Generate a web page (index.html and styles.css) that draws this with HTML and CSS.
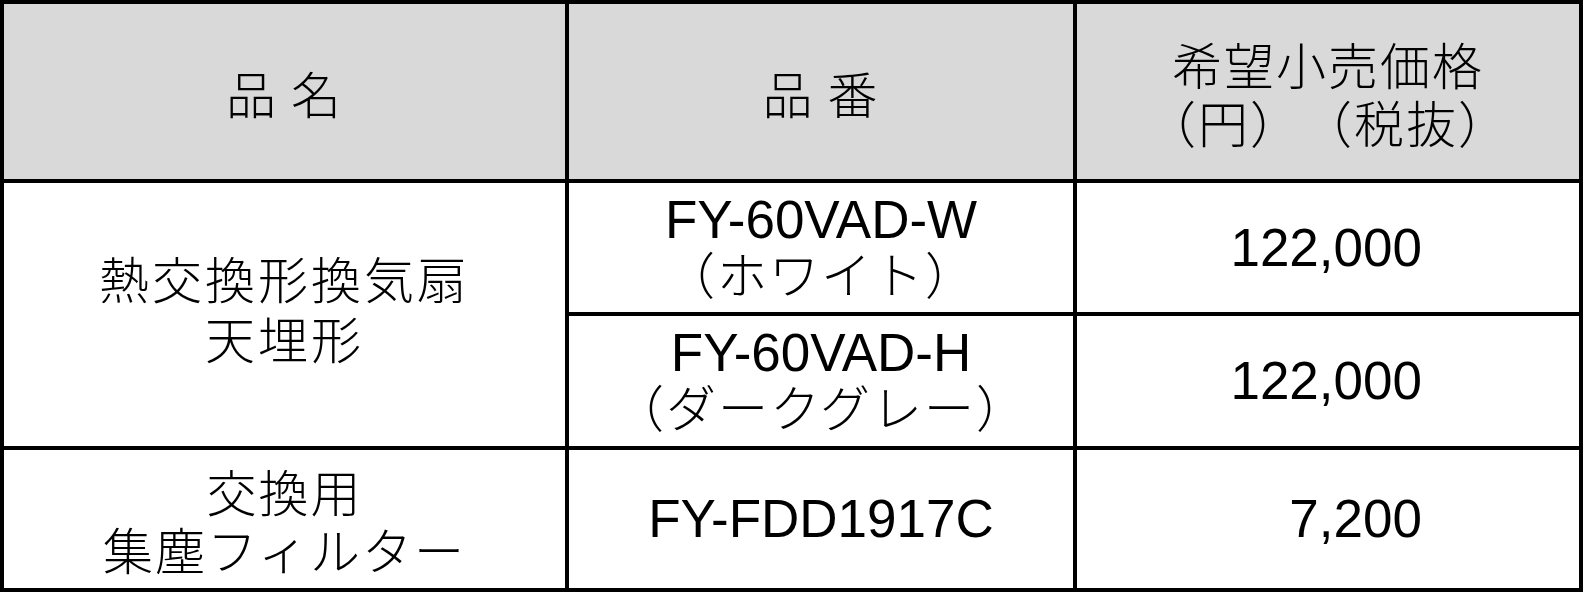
FILE: index.html
```html
<!DOCTYPE html>
<html lang="ja">
<head>
<meta charset="utf-8">
<link rel="stylesheet" href="styles.css">
</head>
<body>
<div class="table">
  <div class="cell head"><span class="ja">品 名</span></div>
  <div class="cell head"><span class="ja">品 番</span></div>
  <div class="cell head"><span class="ja paren">希望小売価格<br>（円）（税抜）</span></div>

  <div class="cell name-main"><span class="ja">熱交換形換気扇<br>天埋形</span></div>
  <div class="cell model"><span>FY-60VAD-W<br><span class="ja">（ホワイト）</span></span></div>
  <div class="cell price"><span>122,000</span></div>

  <div class="cell model"><span>FY-60VAD-H<br><span class="ja">（ダークグレー）</span></span></div>
  <div class="cell price"><span>122,000</span></div>

  <div class="cell"><span class="ja">交換用<br>集塵フィルター</span></div>
  <div class="cell"><span>FY-FDD1917C</span></div>
  <div class="cell price"><span>7,200</span></div>
</div>
</body>
</html>
```

FILE: styles.css
```css
html, body {
  margin: 0;
  padding: 0;
  background: #ffffff;
}

.table {
  display: grid;
  grid-template-columns: 561px 504px 502px;
  grid-template-rows: 175px 129px 130px 138px;
  gap: 4px;
  padding: 4px;
  width: 1575px;
  background: #000000;
  font-family: "Liberation Sans", "Noto Sans CJK JP", sans-serif;
  font-size: 53px;
  line-height: 58px;
  color: #000000;
}

.cell {
  background: #ffffff;
  display: flex;
  align-items: center;
  justify-content: center;
  text-align: center;
}

.head {
  background: #d9d9d9;
}

.name-main {
  grid-row: 2 / span 2;
  line-height: 60px;
  padding-bottom: 16px;
}

.model {
  line-height: 52px;
}

.price {
  justify-content: flex-end;
  padding-right: 157px;
}

.ja {
  font-family: "Noto Sans CJK JP", sans-serif;
  font-size: 50px;
  font-weight: 300;
  letter-spacing: 2px;
}

.name-main .ja {
  letter-spacing: 3px;
}

.paren {
  text-spacing-trim: space-all;
}
```
